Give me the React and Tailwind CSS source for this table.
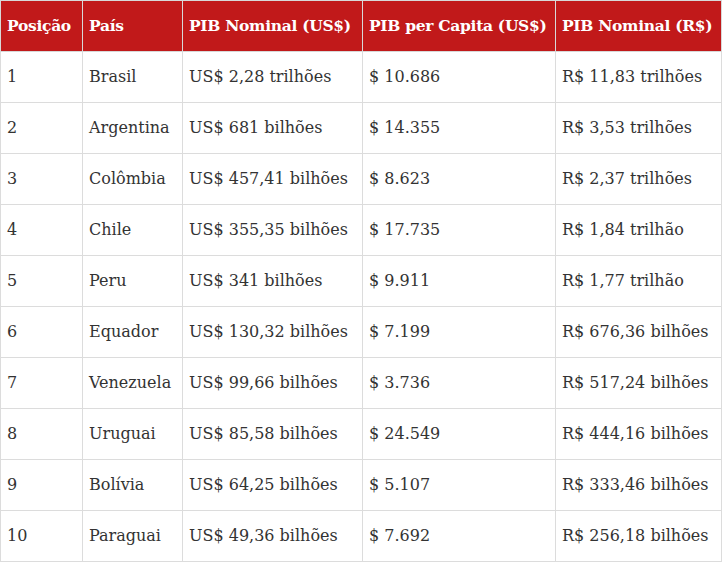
import React from "react";

const rows = [
  ["1", "Brasil", "US$ 2,28 trilhões", "$ 10.686", "R$ 11,83 trilhões"],
  ["2", "Argentina", "US$ 681 bilhões", "$ 14.355", "R$ 3,53 trilhões"],
  ["3", "Colômbia", "US$ 457,41 bilhões", "$ 8.623", "R$ 2,37 trilhões"],
  ["4", "Chile", "US$ 355,35 bilhões", "$ 17.735", "R$ 1,84 trilhão"],
  ["5", "Peru", "US$ 341 bilhões", "$ 9.911", "R$ 1,77 trilhão"],
  ["6", "Equador", "US$ 130,32 bilhões", "$ 7.199", "R$ 676,36 bilhões"],
  ["7", "Venezuela", "US$ 99,66 bilhões", "$ 3.736", "R$ 517,24 bilhões"],
  ["8", "Uruguai", "US$ 85,58 bilhões", "$ 24.549", "R$ 444,16 bilhões"],
  ["9", "Bolívia", "US$ 64,25 bilhões", "$ 5.107", "R$ 333,46 bilhões"],
  ["10", "Paraguai", "US$ 49,36 bilhões", "$ 7.692", "R$ 256,18 bilhões"],
];

const headers = [
  "Posição",
  "País",
  "PIB Nominal (US$)",
  "PIB per Capita (US$)",
  "PIB Nominal (R$)",
];

export default function App() {
  return (
    <div className="bg-white w-[723px] h-[565px] overflow-hidden font-['DejaVu_Serif',serif]">
      <table className="table-fixed border-collapse w-[722px] border border-[#a9a9a9]">
        <colgroup>
          <col className="w-[82px]" />
          <col className="w-[100px]" />
          <col className="w-[180px]" />
          <col className="w-[193px]" />
          <col />
        </colgroup>
        <thead>
          <tr className="bg-[#c1191a] h-[51px]">
            {headers.map((h) => (
              <th
                key={h}
                className="text-left text-white font-bold text-[15.5px] px-[6px] border border-[#d8d8d8] whitespace-nowrap tracking-[-0.3px]"
              >
                {h}
              </th>
            ))}
          </tr>
        </thead>
        <tbody>
          {rows.map((r) => (
            <tr key={r[0]} className="h-[51px]">
              {r.map((c, i) => (
                <td
                  key={i}
                  className="px-[6px] text-[16px] text-[#333333] border border-[#dcdcdc] whitespace-nowrap"
                >
                  {c}
                </td>
              ))}
            </tr>
          ))}
        </tbody>
      </table>
    </div>
  );
}
